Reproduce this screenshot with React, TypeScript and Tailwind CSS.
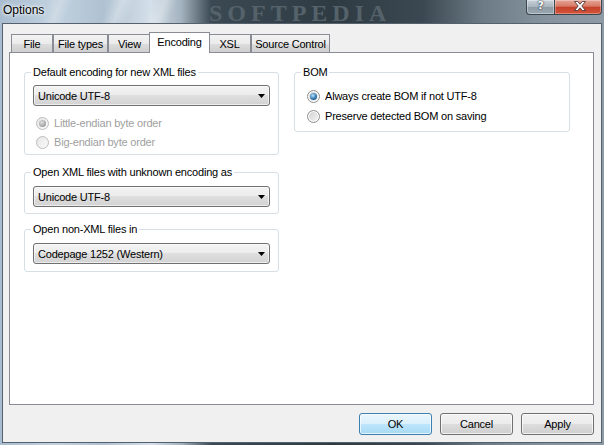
import React from "react";

function Radio({ checked, disabled }: { checked?: boolean; disabled?: boolean }) {
  return (
    <span
      className={
        disabled
          ? "flex h-[13px] w-[13px] shrink-0 items-center justify-center rounded-full border border-[#bcbcbc] bg-[linear-gradient(135deg,#e6e6e6,#fafafa)]"
          : "flex h-[13px] w-[13px] shrink-0 items-center justify-center rounded-full border border-[#8e8f8f] bg-[linear-gradient(135deg,#cfcfcf,#f6f6f6)] shadow-[inset_0_0_0_1px_#ffffff]"
      }
    >
      {checked && (
        <span
          className={
            disabled
              ? "h-[7px] w-[7px] rounded-full bg-[radial-gradient(circle_at_40%_35%,#e0e0e0,#9a9a9a_75%)]"
              : "h-[7px] w-[7px] rounded-full bg-[radial-gradient(circle_at_40%_35%,#b5e2fb,#2a6ea8_60%,#1b4f80)]"
          }
        />
      )}
    </span>
  );
}

function Select({ value }: { value: string }) {
  return (
    <div className="flex h-[21px] items-center justify-between rounded-[3px] border border-[#707070] bg-[linear-gradient(#f3f3f3,#ececec_50%,#dfdfdf_50%,#d2d2d2)] pl-[4px] pr-[4px] shadow-[inset_0_0_0_1px_rgba(255,255,255,0.6)]">
      <span className="leading-[14px]">{value}</span>
      <svg width="7" height="4" viewBox="0 0 7 4">
        <path d="M0 0h7L3.5 4z" fill="#000" />
      </svg>
    </div>
  );
}

function Tab({ label, w, active }: { label: string; w: string; active?: boolean }) {
  if (active) {
    return (
      <div
        className={`relative z-10 -mx-[2px] mb-[-1px] flex h-[21px] items-start justify-center border border-b-0 border-[#898c95] bg-white pt-[2px] ${w}`}
      >
        <span className="leading-[14px]">{label}</span>
      </div>
    );
  }
  return (
    <div
      className={`flex h-[18px] items-center justify-center border border-b-0 border-[#898c95] bg-[linear-gradient(#f3f3f3,#ebebeb_50%,#dddddd_50%,#cfcfcf)] ${w}`}
    >
      <span className="leading-[14px]">{label}</span>
    </div>
  );
}

function Btn({ label, def }: { label: string; def?: boolean }) {
  return (
    <div
      className={
        def
          ? "flex h-[22px] w-[73px] items-center justify-center rounded-[3px] border border-[#3c7fb1] bg-[linear-gradient(#eaf6fd,#d9f0fc_50%,#bee6fd_50%,#a7d9f5)] shadow-[inset_0_0_0_1px_rgba(255,255,255,0.7)]"
          : "flex h-[22px] w-[73px] items-center justify-center rounded-[3px] border border-[#707070] bg-[linear-gradient(#f2f2f2,#ebebeb_50%,#dddddd_50%,#cfcfcf)] shadow-[inset_0_0_0_1px_rgba(255,255,255,0.7)]"
      }
    >
      {label}
    </div>
  );
}

export default function App() {
  return (
    <div className="relative flex h-[445px] w-[604px] flex-col overflow-hidden bg-[linear-gradient(90deg,#a9bdd0_0%,#c1d1df_9%,#b0c2d2_17%,#d4dfe9_25%,#a3b3bf_30%,#3b4953_35%,#2e3b43_55%,#3b4851_70%,#6c7b85_80%,#85939d_90%,#8e9ba4_100%)] font-['Liberation_Sans',Arial,sans-serif] text-[11px] tracking-[-0.2px] text-black">
      {/* title bar */}
      <div className="relative flex h-[23px] shrink-0 items-start bg-[linear-gradient(112deg,transparent_8%,rgba(255,255,255,0.22)_10%,transparent_12%,transparent_18%,rgba(255,255,255,0.28)_20%,transparent_22%,transparent_25%,rgba(255,255,255,0.25)_27%,transparent_29%)]">
        <div className="pl-[3px] pt-[3px] text-[12px] leading-[14px] tracking-normal [text-shadow:0_0_5px_#ffffff,0_0_3px_#ffffff]">
          Options
        </div>
        <div className="pointer-events-none absolute left-[209px] top-[2px] font-['Liberation_Serif',serif] text-[24px] font-bold leading-[23px] tracking-[5px] text-[#55626a]">
          SOFTPEDIA
        </div>
        <div className="ml-auto mr-[2px] flex">
          <div className="flex h-[15px] w-[28px] items-start justify-center rounded-bl-[4px] border border-t-0 border-r-0 border-[#3b4650] bg-[linear-gradient(#c9d2d9,#a7b3bc_50%,#8e9ba5_50%,#9ba8b1)] shadow-[inset_0_0_0_1px_rgba(255,255,255,0.35)]">
            <span className="font-['DejaVu_Sans',sans-serif] text-[11px] font-bold leading-[12px] text-white [text-shadow:0_0_2px_#25303a,0_0_1px_#25303a]">
              ?
            </span>
          </div>
          <div className="flex h-[15px] w-[48px] items-center justify-center rounded-br-[4px] border border-t-0 border-[#3b4650] bg-[linear-gradient(#e5a596,#d77a66_45%,#c4412a_50%,#d4553b)] shadow-[inset_0_0_0_1px_rgba(255,255,255,0.3)]">
            <svg width="14" height="10" viewBox="0 0 14 10" className="ml-[4px] mt-[-2px]">
              <path
                d="M1.5 0.5h3.2L7 3.2 9.3 0.5h3.2L8.8 5l3.7 4.5H9.3L7 6.8 4.7 9.5H1.5L5.2 5z"
                fill="#ffffff"
                stroke="#3a2a2a"
                strokeWidth="0.8"
              />
            </svg>
          </div>
        </div>
      </div>

      {/* client */}
      <div className="ml-[2px] mr-[2px] mb-[2px] flex h-[420px] flex-col border border-[#55626d] bg-[#f0f0f0] pl-[6px] pr-[7px] pt-[8px]">
        <div className="flex h-[20px] items-end pl-[2px]">
          <Tab label="File" w="w-[42px]" />
          <Tab label="File types" w="w-[55px]" />
          <Tab label="View" w="w-[43px]" />
          <Tab label="Encoding" w="w-[61px]" active />
          <Tab label="XSL" w="w-[43px]" />
          <Tab label="Source Control" w="w-[79px]" />
        </div>
        <div className="flex h-[353px] gap-[15px] border border-[#898c95] bg-white pl-[14px] pt-[12px]">
          {/* left column */}
          <div className="flex w-[255px] flex-col">
            <fieldset className="rounded-[3px] border border-[#d5dfe5] px-[8px] pb-[2px]">
              <legend className="-ml-[2px] px-[2px] leading-[14px]">Default encoding for new XML files</legend>
              <div className="mt-[6px]">
                <Select value="Unicode UTF-8" />
              </div>
              <div className="mt-[8px] flex flex-col pl-[3px] text-[#a0a0a0]">
                <div className="flex h-[19px] items-center gap-[5px]">
                  <Radio checked disabled />
                  <span>Little-endian byte order</span>
                </div>
                <div className="flex h-[19px] items-center gap-[5px]">
                  <Radio disabled />
                  <span>Big-endian byte order</span>
                </div>
              </div>
            </fieldset>

            <fieldset className="mt-[10px] rounded-[3px] border border-[#d5dfe5] px-[8px] pb-[6px]">
              <legend className="-ml-[2px] px-[2px] leading-[14px]">Open XML files with unknown encoding as</legend>
              <div className="mt-[7px]">
                <Select value="Unicode UTF-8" />
              </div>
            </fieldset>

            <fieldset className="mt-[8px] rounded-[3px] border border-[#d5dfe5] px-[8px] pb-[7px]">
              <legend className="-ml-[2px] px-[2px] leading-[14px]">Open non-XML files in</legend>
              <div className="mt-[7px]">
                <Select value="Codepage 1252 (Western)" />
              </div>
            </fieldset>
          </div>

          {/* right column */}
          <div className="flex w-[276px] flex-col">
            <fieldset className="rounded-[3px] border border-[#d5dfe5] px-[8px] pb-[5px]">
              <legend className="-ml-[2px] px-[2px] leading-[14px]">BOM</legend>
              <div className="mt-[7px] flex flex-col pl-[4px]">
                <div className="flex h-[20px] items-center gap-[5px]">
                  <Radio checked />
                  <span>Always create BOM if not UTF-8</span>
                </div>
                <div className="flex h-[20px] items-center gap-[5px]">
                  <Radio />
                  <span>Preserve detected BOM on saving</span>
                </div>
              </div>
            </fieldset>
          </div>
        </div>

        <div className="mt-[8px] flex justify-end gap-[8px]">
          <Btn label="OK" def />
          <Btn label="Cancel" />
          <Btn label="Apply" />
        </div>
      </div>
    </div>
  );
}
